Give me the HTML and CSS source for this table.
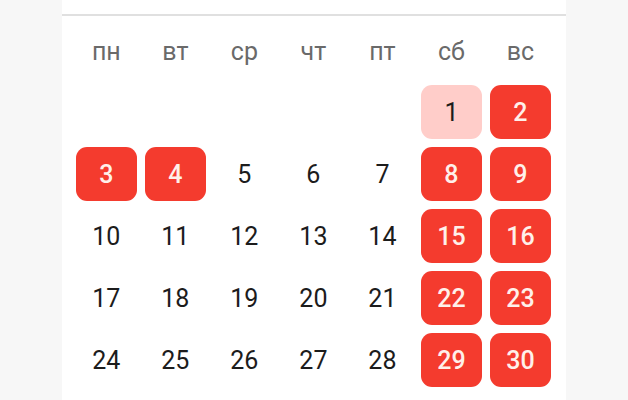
FILE: index.html
```html
<!DOCTYPE html>
<html lang="ru">
<head>
<meta charset="utf-8">
<link rel="stylesheet" href="styles.css">
</head>
<body>
<div class="card">
  <div class="card-top"></div>
  <div class="divider"></div>
  <div class="weekdays">
    <span>пн</span><span>вт</span><span>ср</span><span>чт</span><span>пт</span><span>сб</span><span>вс</span>
  </div>
  <div class="days">
    <div class="day empty"></div>
    <div class="day empty"></div>
    <div class="day empty"></div>
    <div class="day empty"></div>
    <div class="day empty"></div>
    <div class="day today">1</div>
    <div class="day off">2</div>
    <div class="day off">3</div>
    <div class="day off">4</div>
    <div class="day">5</div>
    <div class="day">6</div>
    <div class="day">7</div>
    <div class="day off">8</div>
    <div class="day off">9</div>
    <div class="day">10</div>
    <div class="day">11</div>
    <div class="day">12</div>
    <div class="day">13</div>
    <div class="day">14</div>
    <div class="day off">15</div>
    <div class="day off">16</div>
    <div class="day">17</div>
    <div class="day">18</div>
    <div class="day">19</div>
    <div class="day">20</div>
    <div class="day">21</div>
    <div class="day off">22</div>
    <div class="day off">23</div>
    <div class="day">24</div>
    <div class="day">25</div>
    <div class="day">26</div>
    <div class="day">27</div>
    <div class="day">28</div>
    <div class="day off">29</div>
    <div class="day off">30</div>
  </div>
</div>
</body>
</html>
```
FILE: styles.css
```css
html, body {
  margin: 0;
  padding: 0;
}
body {
  background: #f7f7f7;
  font-family: Roboto, "Noto Sans", sans-serif;
  width: 628px;
  height: 400px;
  overflow: hidden;
}
.card {
  margin-left: 62px;
  width: 504px;
  height: 400px;
  background: #ffffff;
}
.card-top {
  height: 14px;
}
.divider {
  height: 2px;
  background: #e0e0e0;
}
.weekdays {
  display: grid;
  grid-template-columns: repeat(7, 61.7px);
  column-gap: 7.33px;
  margin-left: 13.5px;
  padding-top: 22px;
  padding-bottom: 19px;
  line-height: 28px;
  font-size: 25px;
  color: #6a6a6a;
  text-align: center;
}
.days {
  display: grid;
  grid-template-columns: repeat(7, 61.7px);
  grid-auto-rows: 54px;
  column-gap: 7.33px;
  row-gap: 8px;
  margin-left: 13.5px;
}
.day {
  display: flex;
  align-items: center;
  justify-content: center;
  font-size: 25px;
  color: #1c1c1c;
  border-radius: 11px;
}
.day.off {
  background: #f43b2e;
  color: #fff0ea;
  font-weight: 500;
}
.day.today {
  background: #ffcdc9;
  color: #1c1c1c;
}
```
